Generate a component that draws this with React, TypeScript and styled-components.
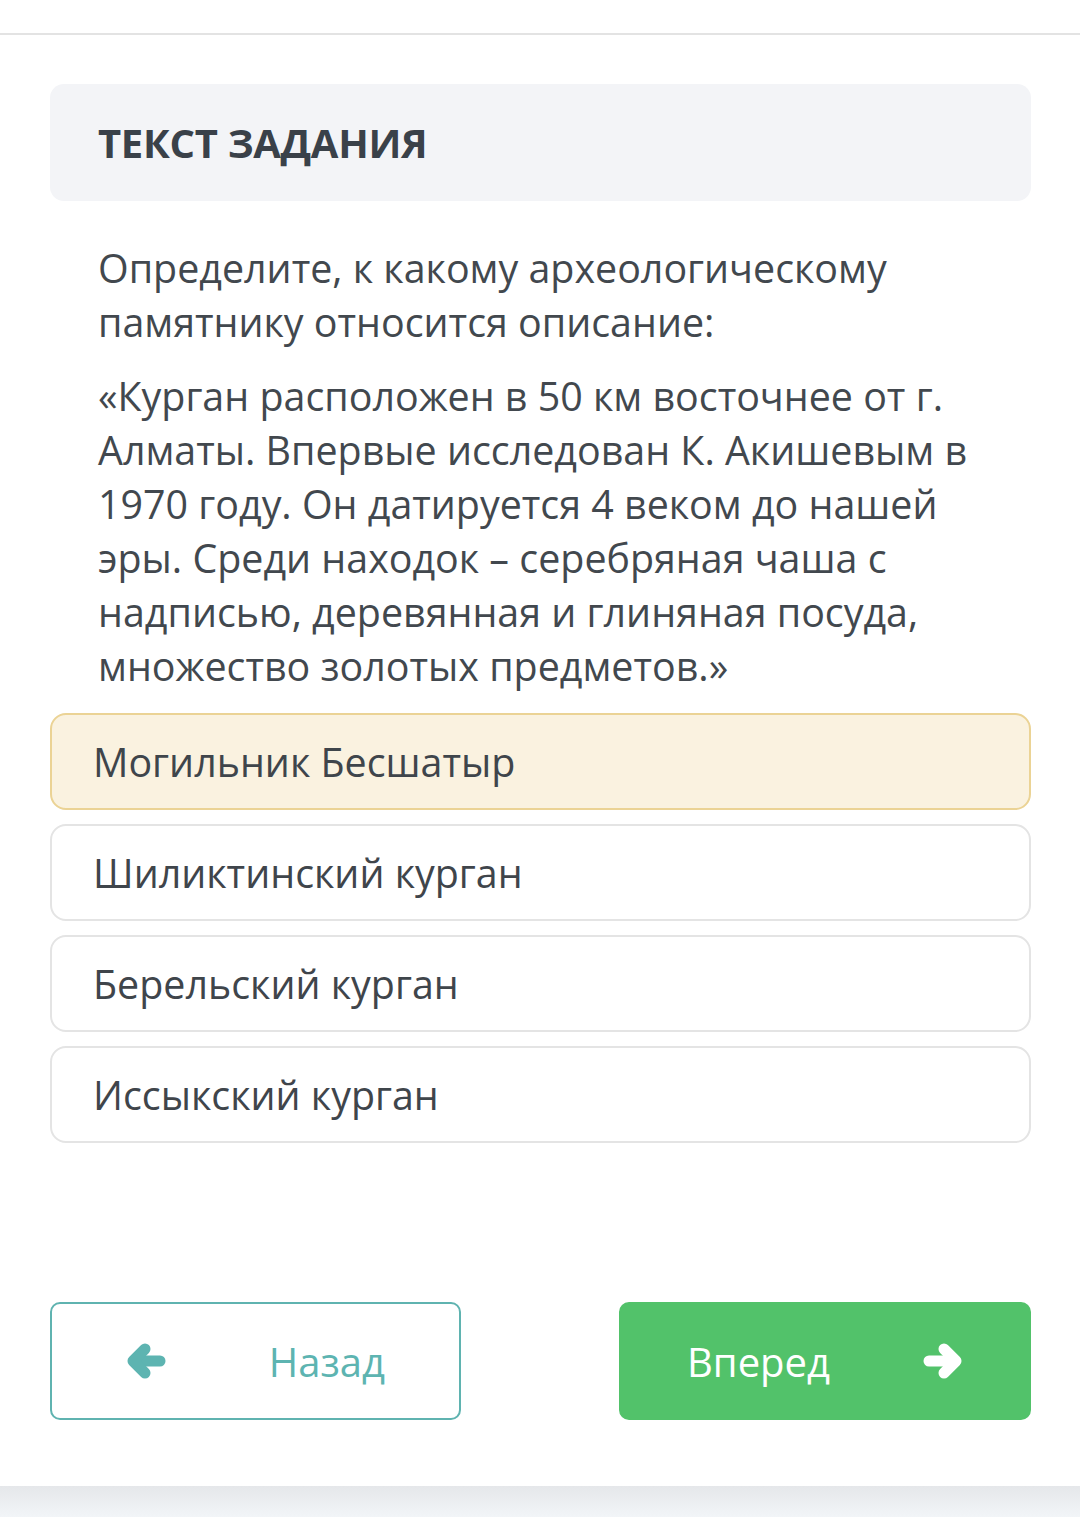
import React, {useState} from 'react'
import styled, {createGlobalStyle} from 'styled-components'

const GlobalStyle = createGlobalStyle`
  html, body {
    margin: 0;
    padding: 0;
    background: #ffffff;
  }
  body {
    font-family: "Open Sans", "Noto Sans", sans-serif;
    -webkit-font-smoothing: antialiased;
  }
`

const Page = styled.div`
  width: 1080px;
  height: 1517px;
  display: flex;
  flex-direction: column;
  background: #ffffff;
  overflow: hidden;
`

const TopBar = styled.div`
  height: 33px;
  flex: none;
  border-bottom: 2px solid #e3e3e3;
`

const Content = styled.div`
  flex: 1;
  display: flex;
  flex-direction: column;
  padding: 49px 49px 0 50px;
`

const TaskHeader = styled.div`
  height: 117px;
  display: flex;
  align-items: center;
  padding: 0 48px;
  background: #f3f4f7;
  border-radius: 14px;
`

const TaskTitle = styled.h2`
  margin: 0;
  font-size: 40px;
  font-weight: 700;
  color: #3a4149;
  letter-spacing: -0.3px;
`

const Question = styled.div`
  padding: 40px 48px 0 48px;
  display: flex;
  flex-direction: column;
  gap: 20px;
`

const Paragraph = styled.p`
  margin: 0;
  font-size: 39.4px;
  line-height: 54px;
  color: #42484e;
`

const Options = styled.div`
  margin-top: 20px;
  display: flex;
  flex-direction: column;
  gap: 14px;
`

const Option = styled.div<{ selected?: boolean }>`
  height: 97px;
  box-sizing: border-box;
  display: flex;
  align-items: center;
  padding: 0 41px;
  border-radius: 16px;
  border: 2px solid ${({selected}) => (selected ? '#ebd395' : '#e4e4e4')};
  background: ${({selected}) => (selected ? '#faf2e0' : '#ffffff')};
  font-size: 39.4px;
  color: #3f454b;
  cursor: pointer;
`

const NavRow = styled.div`
  margin-top: 159px;
  display: flex;
  justify-content: space-between;
`

const NavButton = styled.button<{ primary?: boolean; inset: number }>`
  width: ${({primary}) => (primary ? 412 : 411)}px;
  height: 118px;
  box-sizing: border-box;
  display: flex;
  align-items: center;
  justify-content: space-between;
  padding: 0 ${({inset}) => inset}px;
  border-radius: 10px;
  border: 2px solid ${({primary}) => (primary ? '#52c26a' : '#5fb3b0')};
  background: ${({primary}) => (primary ? '#52c26a' : '#ffffff')};
  color: ${({primary}) => (primary ? '#ffffff' : '#5db4b1')};
  font-family: "Open Sans", "Noto Sans", sans-serif;
  font-size: 40px;
  cursor: pointer;
`

const BottomBand = styled.div`
  height: 31px;
  flex: none;
  background: linear-gradient(to bottom, #e5e7ea, #f2f5f8);
`

function Arrow({dir}: { dir: 'left' | 'right' }) {
  return (
    <svg width="40" height="36" viewBox="0 0 40 36"
         style={{transform: dir === 'right' ? 'scaleX(-1)' : undefined}}>
      <g fill="none" stroke="currentColor" strokeWidth="11" strokeLinecap="round" strokeLinejoin="round">
        <path d="M8 18 H34"/>
        <path d="M19 6 L7 18 L19 30"/>
      </g>
    </svg>
  )
}

const answers = [
  'Могильник Бесшатыр',
  'Шиликтинский курган',
  'Берельский курган',
  'Иссыкский курган',
]

export default function App() {
  const [selected, setSelected] = useState(0)

  return (
    <>
      <GlobalStyle/>
      <Page>
        <TopBar/>
        <Content>
          <TaskHeader>
            <TaskTitle>ТЕКСТ ЗАДАНИЯ</TaskTitle>
          </TaskHeader>
          <Question>
            <Paragraph>Определите, к какому археологическому памятнику относится описание:</Paragraph>
            <Paragraph>
              «Курган расположен в 50 км восточнее от г. Алматы. Впервые исследован К. Акишевым в 1970 году.
              Он датируется 4 веком до нашей эры. Среди находок – серебряная чаша с надписью, деревянная и
              глиняная посуда, множество золотых предметов.»
            </Paragraph>
          </Question>
          <Options>
            {answers.map((a, i) => (
              <Option key={a} selected={i === selected} onClick={() => setSelected(i)}>
                {a}
              </Option>
            ))}
          </Options>
          <NavRow>
            <NavButton inset={74}>
              <Arrow dir="left"/>
              <span>Назад</span>
            </NavButton>
            <NavButton primary inset={66}>
              <span>Вперед</span>
              <Arrow dir="right"/>
            </NavButton>
          </NavRow>
        </Content>
        <BottomBand/>
      </Page>
    </>
  )
}
